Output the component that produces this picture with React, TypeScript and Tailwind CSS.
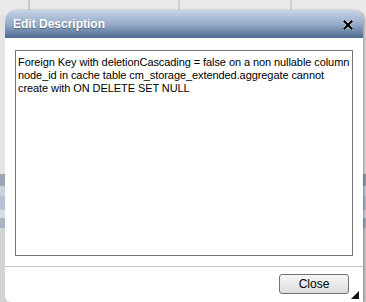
import React from "react"

const lines = [
  "Foreign Key with deletionCascading = false on a non nullable column",
  "node_id in cache table cm_storage_extended.aggregate cannot",
  "create with ON DELETE SET NULL",
]

export default function App() {
  return (
    <div className="relative w-[366px] h-[302px] overflow-hidden bg-[#e9e9e9] font-['Liberation_Sans',Arial,sans-serif]">
      {/* page behind the dialog */}
      <div className="flex h-full flex-col">
        <div className="flex h-[14px]">
          <div className="w-[30px] border-r-2 border-[#c9c9c9]" />
          <div className="w-[150px] border-r-2 border-[#d0d0d0]" />
          <div className="w-[112px] border-r-2 border-[#d0d0d0]" />
          <div className="flex-1" />
        </div>
        <div className="h-[160px] bg-[#e4e4e4]" />
        <div className="h-[12px] bg-[#9aa6b6]" />
        <div className="h-[10px] bg-[#c9d3e0]" />
        <div className="h-[14px] bg-[#b5c2d3]" />
        <div className="h-[8px] bg-[#d9dde2]" />
        <div className="h-[10px] bg-[#a9b4c2]" />
        <div className="flex-1 bg-[#d3d3d3]" />
      </div>

      {/* dialog */}
      <div className="absolute left-[5px] top-[10px] w-[358px] h-[292px] flex flex-col rounded-t-[10px] rounded-bl-[6px] bg-white shadow-[2px_0_2px_rgba(0,0,0,0.25)] overflow-hidden">
        <div className="h-[28px] shrink-0 flex items-center justify-between pl-[8px] pr-[10px] bg-gradient-to-b from-[#c6d4e8] via-[#97acc9] to-[#4e6b93]">
          <span className="text-white text-[12px] font-bold [text-shadow:0_1px_1px_rgba(0,0,0,0.35)]">
            Edit Description
          </span>
          <svg width="10" height="10" viewBox="0 0 10 10" className="mt-[1px]">
            <path d="M1.5 1.5 L8.5 8.5 M8.5 1.5 L1.5 8.5" stroke="#fff" strokeWidth="3.6" strokeLinecap="square" opacity="0.6" />
            <path d="M1.5 1.5 L8.5 8.5 M8.5 1.5 L1.5 8.5" stroke="#000" strokeWidth="2.2" strokeLinecap="square" />
          </svg>
        </div>

        <div className="flex-1 px-[10px] pt-[12px] pb-[10px] flex flex-col">
          <div className="flex-1 border border-[#737373] px-[2px] pt-[5px] text-[11px] leading-[13px] tracking-[-0.08px] text-black">
            {lines.map((l) => (
              <div key={l} className="whitespace-nowrap">{l}</div>
            ))}
          </div>
        </div>

        <div className="border-t border-[#cacaca] h-[36px] shrink-0 flex items-start justify-end pr-[14px] pt-[7px] relative">
          <button className="w-[70px] h-[20px] rounded-[3px] border border-[#707070] bg-gradient-to-b from-[#f6f6f6] to-[#dddddd] text-[12px] text-black leading-none">
            Close
          </button>
          <svg width="8" height="8" viewBox="0 0 8 8" className="absolute right-[4px] bottom-[3px]">
            <path d="M8 0 L8 8 L0 8 Z" fill="#111" />
          </svg>
        </div>
      </div>
    </div>
  )
}
